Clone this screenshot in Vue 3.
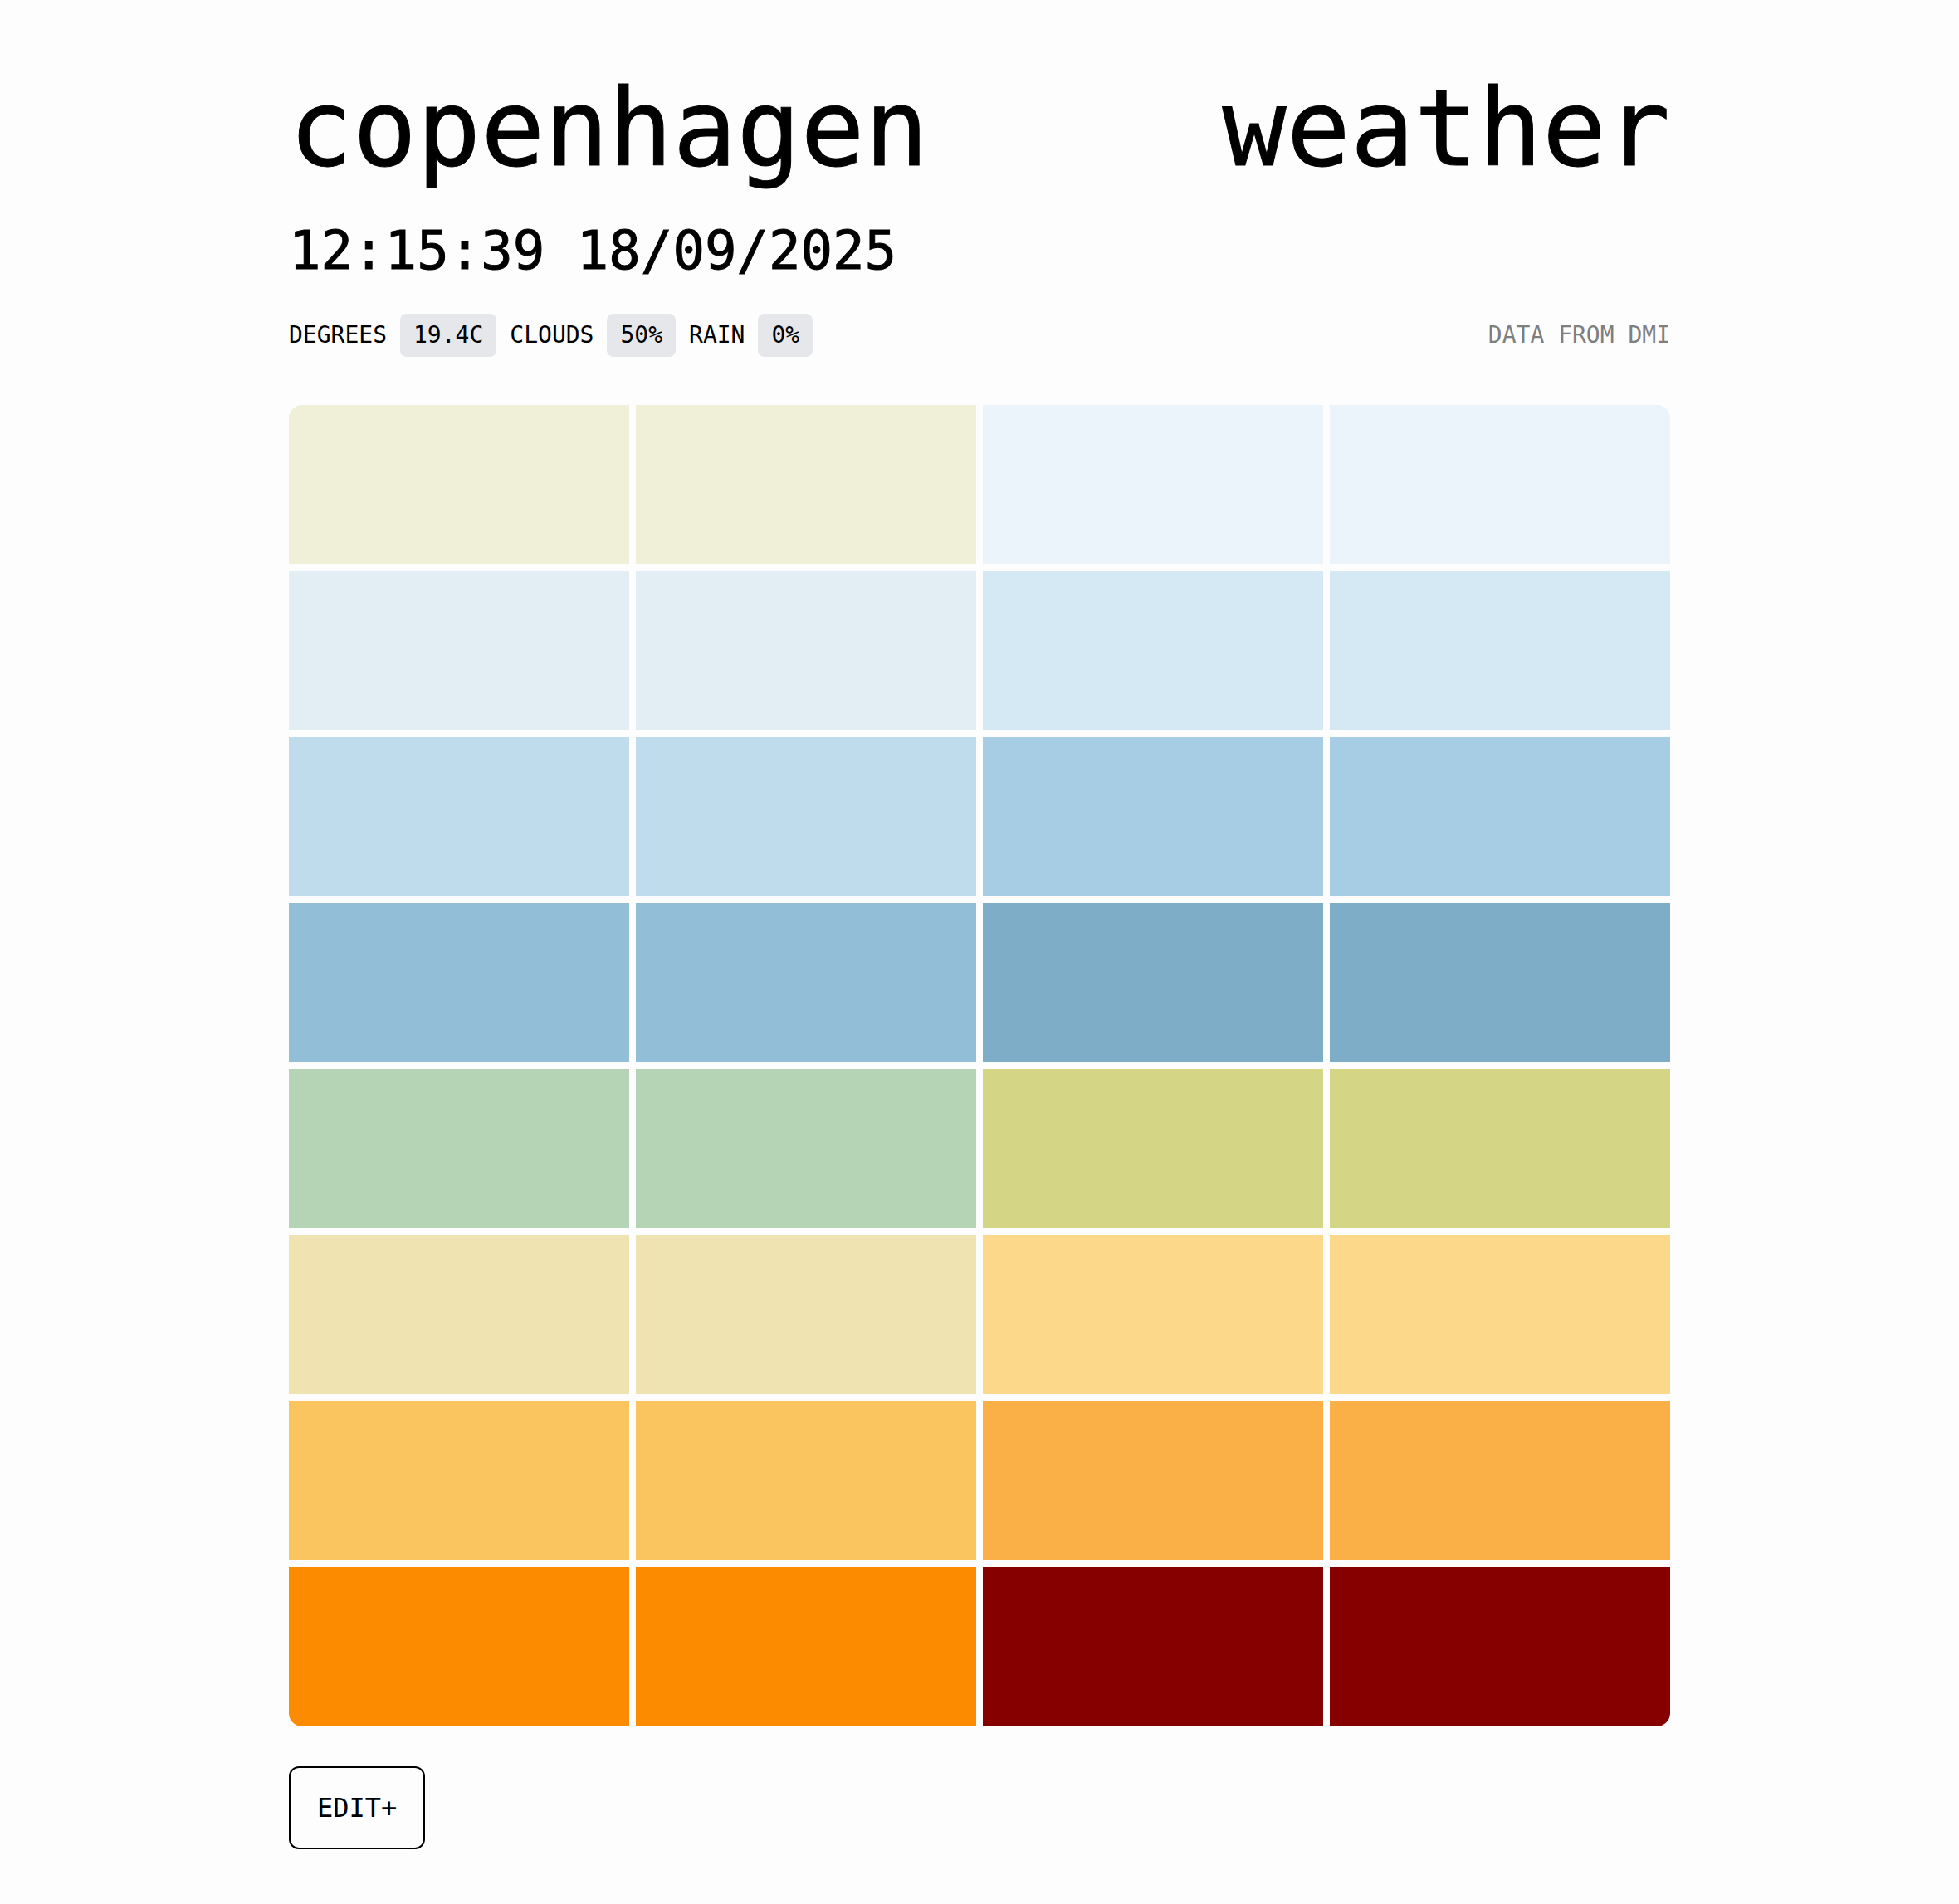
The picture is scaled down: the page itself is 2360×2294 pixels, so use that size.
<script setup>
import { ref } from 'vue'

const city = ref('copenhagen')
const timestamp = ref('12:15:39 18/09/2025')

const readings = [
  { label: 'DEGREES', value: '19.4C' },
  { label: 'CLOUDS', value: '50%' },
  { label: 'RAIN', value: '0%' },
]

const palette = [
  '#f0efd8', '#ebf3fb',
  '#e2eef3', '#d5e9f4',
  '#bfdced', '#a6cde4',
  '#93bed8', '#7eadc8',
  '#b5d4b6', '#d4d686',
  '#efe3b1', '#fcd88a',
  '#fac55f', '#fbb047',
  '#fc8b00', '#870000',
]
const cells = palette.flatMap((color) => [color, color])
</script>

<template>
  <main class="page">
    <h1 class="title">
      <span>{{ city }}</span>
      <span>weather</span>
    </h1>
    <time class="clock">{{ timestamp }}</time>
    <section class="status">
      <dl class="readings">
        <div v-for="item in readings" :key="item.label" class="reading">
          <dt>{{ item.label }}</dt>
          <dd class="chip">{{ item.value }}</dd>
        </div>
      </dl>
      <p class="source">DATA FROM DMI</p>
    </section>
    <div class="swatches">
      <div
        v-for="(color, i) in cells"
        :key="i"
        class="swatch"
        :style="{ backgroundColor: color }"
      ></div>
    </div>
    <button type="button" class="edit">EDIT+</button>
  </main>
</template>

<style>
body {
  margin: 0;
  background: #fdfdfd;
}
</style>

<style scoped>
.page {
  box-sizing: border-box;
  max-width: 1728px;
  margin: 0 auto;
  padding: 91px 32px 66px;
  color: #000;
  font-family: "DejaVu Sans Mono", "Liberation Mono", monospace;
  font-size: 28px;
  line-height: 36px;
}

.title {
  display: flex;
  flex-wrap: wrap;
  justify-content: space-between;
  margin: 0;
  font-size: 128px;
  font-weight: 400;
  line-height: 128px;
}

.title,
.clock {
  -webkit-text-stroke: 1px currentColor;
}

.clock {
  display: block;
  margin-top: 51px;
  font-size: 64px;
  line-height: 64px;
}

.status {
  display: flex;
  flex-wrap: wrap;
  align-items: center;
  justify-content: space-between;
  gap: 16px;
  margin-top: 44px;
}

.readings,
.reading {
  display: flex;
  align-items: center;
  gap: 16px;
  margin: 0;
}

.chip {
  margin: 0;
  padding: 8px 16px;
  border-radius: 8px;
  background: #e5e7eb;
}

.source {
  margin: 0;
  color: #7f7f7f;
}

.swatches {
  display: grid;
  grid-template-columns: repeat(4, 1fr);
  grid-auto-rows: 192px;
  gap: 8px;
  margin-top: 58px;
  border-radius: 16px;
  overflow: hidden;
}

.edit {
  display: block;
  margin-top: 48px;
  padding: 24px 32px;
  border: 2px solid #000;
  border-radius: 12px;
  background: transparent;
  color: inherit;
  font-family: inherit;
  font-size: 32px;
  line-height: 48px;
  cursor: pointer;
}
</style>
